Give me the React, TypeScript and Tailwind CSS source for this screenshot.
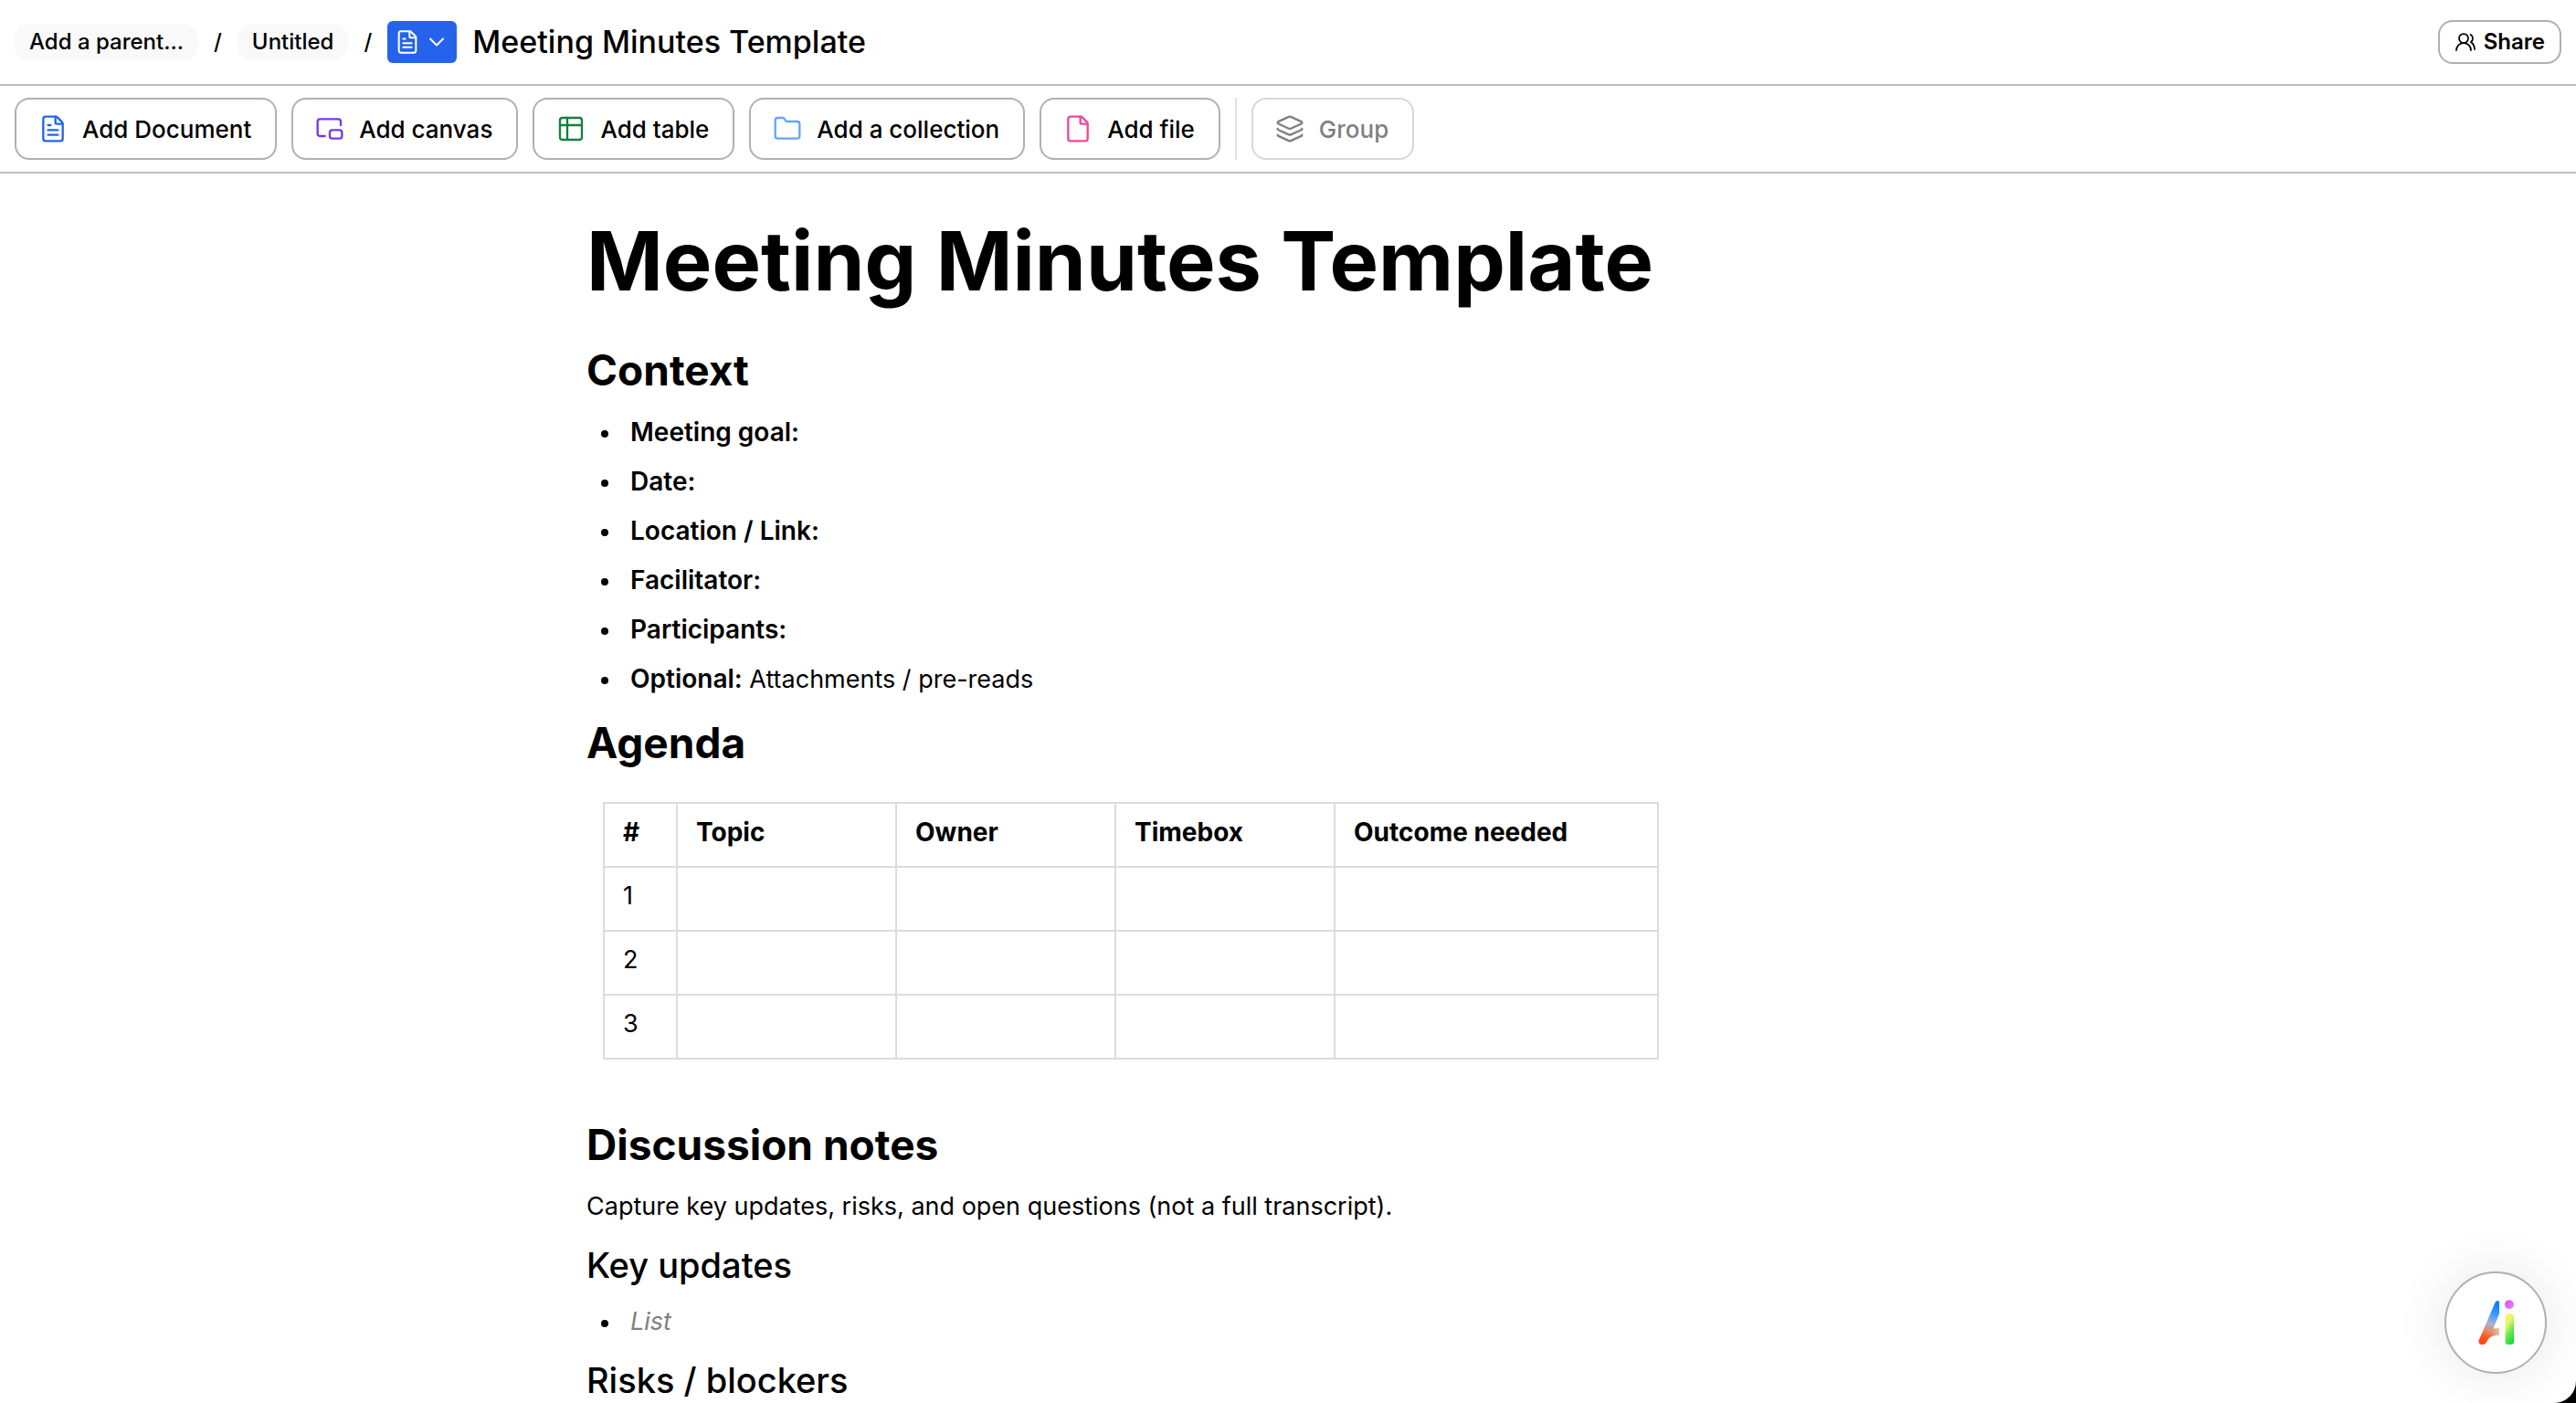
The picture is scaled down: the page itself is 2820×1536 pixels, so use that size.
import type { ReactNode } from 'react'
import { ChevronDown, File, FileText, Folder, Layers, PictureInPicture2, UsersRound } from 'lucide-react'

const CONTEXT_ITEMS: { label: string; value?: string }[] = [
  { label: 'Meeting goal:' },
  { label: 'Date:' },
  { label: 'Location / Link:' },
  { label: 'Facilitator:' },
  { label: 'Participants:' },
  { label: 'Optional:', value: 'Attachments / pre-reads' },
]

const AGENDA_COLUMNS = [
  { label: '#', width: 'w-[80px]' },
  { label: 'Topic', width: 'w-[240px]' },
  { label: 'Owner', width: 'w-[240px]' },
  { label: 'Timebox', width: 'w-[240px]' },
  { label: 'Outcome needed', width: 'w-[354px]' },
]

function TableIcon({ className }: { className?: string }) {
  return (
    <svg
      className={className}
      viewBox="0 0 24 24"
      fill="none"
      stroke="currentColor"
      strokeWidth={1.75}
      strokeLinecap="round"
      strokeLinejoin="round"
      aria-hidden="true"
    >
      <rect x="3" y="3" width="18" height="18" rx="2" />
      <path d="M3 9h18M9 3v18" />
    </svg>
  )
}

function AiLogo() {
  return (
    <svg viewBox="0 0 40 50" className="h-[50px] w-10" aria-hidden="true">
      <defs>
        <linearGradient id="ai-a" gradientUnits="userSpaceOnUse" x1="22" y1="4" x2="7" y2="48">
          <stop offset="0" stopColor="#0a7cff" />
          <stop offset="0.28" stopColor="#3f9bff" />
          <stop offset="0.5" stopColor="#a9b4cf" />
          <stop offset="0.68" stopColor="#e58a66" />
          <stop offset="0.85" stopColor="#fb5524" />
          <stop offset="1" stopColor="#ff4310" />
        </linearGradient>
        <linearGradient id="ai-bar" x1="0" y1="0" x2="1" y2="0">
          <stop offset="0" stopColor="#e8a27c" stopOpacity="0" />
          <stop offset="1" stopColor="#eac3a0" />
        </linearGradient>
        <linearGradient id="ai-i" x1="0.3" y1="0" x2="0.7" y2="1">
          <stop offset="0" stopColor="#fbf56a" />
          <stop offset="0.3" stopColor="#e2f56c" />
          <stop offset="0.6" stopColor="#6be657" />
          <stop offset="1" stopColor="#12dc35" />
        </linearGradient>
        <linearGradient id="ai-dot" x1="0" y1="0" x2="1" y2="1">
          <stop offset="0" stopColor="#e24bf5" />
          <stop offset="1" stopColor="#e985fb" />
        </linearGradient>
      </defs>
      <path
        d="M24 2.5V15L17.5 31.5H24V38.5C17.5 38.5 13 40.5 10.5 45.5C9.5 48 8.2 49 5.6 49C2.4 49 .7 46.6 1.8 43.9L19.4 3.2C20.6 .5 24 .2 24 2.5Z"
        fill="url(#ai-a)"
      />
      <path d="M14 31.5H24V38.5C20 38.5 17 39.2 14 41Z" fill="url(#ai-bar)" />
      <rect x="30.5" y="15" width="9.5" height="34" rx="3.5" fill="url(#ai-i)" />
      <circle cx="35" cy="5.2" r="5" fill="url(#ai-dot)" />
    </svg>
  )
}

function ToolbarButton({ icon, children, disabled }: { icon: ReactNode; children: ReactNode; disabled?: boolean }) {
  return (
    <button
      type="button"
      disabled={disabled}
      className="flex h-[68px] items-center gap-4 rounded-2xl border-2 border-[#b0b0b0] pr-[26px] pl-6 text-[26px] font-medium whitespace-nowrap disabled:opacity-50"
    >
      {icon}
      {children}
    </button>
  )
}

function Crumb({ children }: { children: ReactNode }) {
  return (
    <>
      <a href="#" className="flex h-10 items-center rounded-2xl bg-[#f9f9f9] px-4">
        {children}
      </a>
      <span>/</span>
    </>
  )
}

function Bullet({ children }: { children: ReactNode }) {
  return (
    <li className="flex h-[54px] items-center gap-6 pl-4 before:mt-1 before:size-2 before:rounded-full before:bg-black">
      <span>{children}</span>
    </li>
  )
}

function AgendaTable() {
  return (
    <table className="mt-[38px] ml-[18px] table-fixed border-collapse text-left leading-[54px]">
      <thead>
        <tr>
          {AGENDA_COLUMNS.map((col) => (
            <th
              key={col.label}
              className={`${col.width} border-2 border-[#dcdcdc] px-5 pt-1 pb-[10px] text-[28px] font-bold`}
            >
              {col.label}
            </th>
          ))}
        </tr>
      </thead>
      <tbody>
        {[1, 2, 3].map((n) => (
          <tr key={n}>
            <td className="border-2 border-[#dcdcdc] px-5 pt-1 pb-[10px]">{n}</td>
            {AGENDA_COLUMNS.slice(1).map((col) => (
              <td key={col.label} className="border-2 border-[#dcdcdc]" />
            ))}
          </tr>
        ))}
      </tbody>
    </table>
  )
}

export default function App() {
  return (
    <div className="h-screen bg-black font-['Inter','Liberation_Sans',sans-serif] text-black">
      <div className="flex h-full flex-col overflow-hidden rounded-br-3xl bg-white">
        <header className="flex shrink-0 items-center justify-between border-b-2 border-[#bfbfbf] px-4">
          <nav aria-label="Breadcrumb" className="flex h-[92px] items-center gap-[17px] text-2xl font-medium">
            <Crumb>Add a parent...</Crumb>
            <Crumb>Untitled</Crumb>
            <button
              type="button"
              aria-label="Document type"
              className="flex h-[46px] items-center gap-1 rounded-md bg-[#2563eb] px-2 text-white"
            >
              <FileText size={28} strokeWidth={1.75} />
              <ChevronDown size={28} strokeWidth={1.75} />
            </button>
            <span className="text-[34px]">Meeting Minutes Template</span>
          </nav>
          <button
            type="button"
            className="flex h-12 items-center gap-2 rounded-2xl border-2 border-[#b0b0b0] px-4 text-2xl font-semibold"
          >
            <UsersRound size={24} strokeWidth={1.75} />
            Share
          </button>
        </header>

        <div role="toolbar" className="flex h-24 shrink-0 items-center gap-4 border-b-2 border-[#bfbfbf] px-4">
          <ToolbarButton icon={<FileText size={32} strokeWidth={1.75} className="text-[#2563eb]" />}>
            Add Document
          </ToolbarButton>
          <ToolbarButton icon={<PictureInPicture2 size={32} strokeWidth={1.75} className="text-[#723be6]" />}>
            Add canvas
          </ToolbarButton>
          <ToolbarButton icon={<TableIcon className="size-8 text-[#15803d]" />}>Add table</ToolbarButton>
          <ToolbarButton icon={<Folder size={32} strokeWidth={1.75} className="text-[#60a5fa]" />}>
            Add a collection
          </ToolbarButton>
          <ToolbarButton icon={<File size={32} strokeWidth={1.75} className="text-[#ec4899]" />}>Add file</ToolbarButton>
          <div className="h-[68px] w-0.5 bg-[#e0e0e0]" />
          <ToolbarButton icon={<Layers size={32} strokeWidth={1.75} />} disabled>
            Group
          </ToolbarButton>
        </div>

        <main className="min-h-0 flex-1 overflow-hidden">
          <article className="mx-auto max-w-[1536px] pt-12 text-[27px]">
            <h1 className="text-[90px] leading-[96px] font-bold">Meeting Minutes Template</h1>

            <h2 className="mt-11 text-[46px] leading-[54px] font-bold">Context</h2>
            <ul className="mt-[14px]">
              {CONTEXT_ITEMS.map((item) => (
                <Bullet key={item.label}>
                  <strong className="text-[28px] font-semibold">{item.label}</strong> {item.value}
                </Bullet>
              ))}
            </ul>

            <h2 className="mt-4 text-[46px] leading-[54px] font-bold">Agenda</h2>
            <AgendaTable />

            <h2 className="mt-[66px] text-[46px] leading-[54px] font-bold">Discussion notes</h2>
            <p className="mt-[14px] leading-[54px]">
              Capture key updates, risks, and open questions (not a full transcript).
            </p>

            <h3 className="mt-3 text-[38px] leading-[50px] font-medium">Key updates</h3>
            <ul className="mt-[10px]">
              <Bullet>
                <em className="text-[#808080]">List</em>
              </Bullet>
            </ul>

            <h3 className="mt-3 text-[38px] leading-[50px] font-medium">Risks / blockers</h3>
          </article>
        </main>
      </div>

      <button
        type="button"
        aria-label="AI assistant"
        className="fixed right-8 bottom-8 flex size-28 items-center justify-center rounded-full border-2 border-[#b0b0b0] bg-white shadow-[0_0_60px_rgba(0,0,0,0.1)]"
      >
        <AiLogo />
      </button>
    </div>
  )
}
